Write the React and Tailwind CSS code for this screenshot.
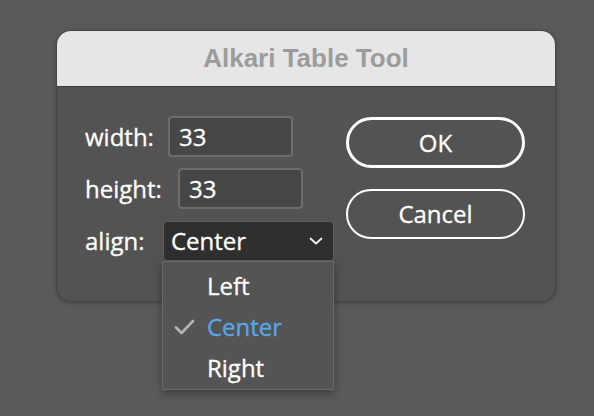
import React from 'react';

const bodyFont = { fontFamily: '"Open Sans", "Noto Sans", sans-serif' };

function Field({ label, value, labelClass }) {
  return (
    <div className="flex items-center">
      <span className={`text-[24px] leading-none text-white font-medium ${labelClass}`}>{label}</span>
      <div className="h-[41px] w-[125px] rounded-[4px] border-2 border-[#6c6c6c] bg-[#464646] flex items-center pl-[9px] text-[24px] font-medium text-white">
        {value}
      </div>
    </div>
  );
}

export default function App() {
  const options = ['Left', 'Center', 'Right'];

  return (
    <div className="w-[594px] h-[416px] bg-[#5a5a5a] pt-[30px] pl-[56px] overflow-hidden" style={bodyFont}>
      <div className="w-[500px] rounded-[15px] border border-[#464646] bg-[#535353] shadow-[0_1px_4px_rgba(0,0,0,0.25)]">
        {/* title bar */}
        <div className="h-[56px] rounded-t-[14px] bg-[#e6e6e6] border-b border-[#3d3d3d] flex items-center justify-center">
          <span className="text-[26px] font-bold text-[#9c9c9c] font-['Liberation_Sans',Arial,sans-serif]">
            Alkari Table Tool
          </span>
        </div>

        <div className="h-[214px] flex justify-between pl-[28px] pr-[30px] pt-[29px] [-webkit-text-stroke:0.3px_currentColor]">
          <div className="flex flex-col gap-[11px]">
            <Field label="width:" value="33" labelClass="w-[83px]" />
            <Field label="height:" value="33" labelClass="w-[93px]" />

            <div className="flex items-center mt-[1px]">
              <span className="w-[78px] text-[24px] leading-none font-medium text-white">align:</span>
              <div className="relative">
                <div className="h-[40px] w-[171px] rounded-[4px] border border-[#5e5e5e] bg-[#2f2f2f] flex items-center justify-between pl-[7px] pr-[10px] text-[24px] font-medium text-white">
                  <span>Center</span>
                  <svg width="14" height="8" viewBox="0 0 14 8" fill="none">
                    <path d="M1.5 1.5 L7 6.5 L12.5 1.5" stroke="#f2f2f2" strokeWidth="1.8" strokeLinecap="round" strokeLinejoin="round" />
                  </svg>
                </div>

                {/* open dropdown menu */}
                <div className="absolute left-[-1px] top-full z-10 w-[172px] border border-[#6a6a6a] bg-[#545454] pt-[3px] pb-[1px] shadow-[0_3px_8px_rgba(0,0,0,0.35)]">
                  {options.map((opt) => (
                    <div key={opt} className="h-[41px] flex items-center">
                      <div className="w-[44px] flex justify-end pr-[12px]">
                        {opt === 'Center' && (
                          <svg width="21" height="16" viewBox="0 0 21 16" fill="none">
                            <path d="M2 8.5 L7.5 14 L19 2" stroke="#b4b4b4" strokeWidth="2.6" strokeLinecap="round" strokeLinejoin="round" />
                          </svg>
                        )}
                      </div>
                      <span className={`text-[24px] font-medium ${opt === 'Center' ? 'text-[#5aa7e8]' : 'text-white'}`}>
                        {opt}
                      </span>
                    </div>
                  ))}
                </div>
              </div>
            </div>
          </div>

          <div className="flex flex-col gap-[21px] pt-[1px]">
            <button className="h-[51px] w-[179px] rounded-full border-[3px] border-white text-[24px] font-medium text-white">
              OK
            </button>
            <button className="h-[50px] w-[179px] rounded-full border-2 border-white text-[24px] font-medium text-white">
              Cancel
            </button>
          </div>
        </div>
      </div>
    </div>
  );
}
